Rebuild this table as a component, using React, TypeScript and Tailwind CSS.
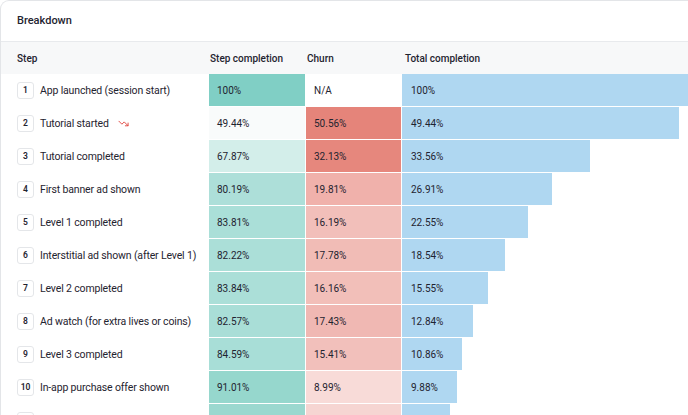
import { TrendingDown } from "lucide-react"

const rows = [
  { n: 1, label: "App launched (session start)", step: "100%", stepBg: "bg-[#80cfc5]", churn: "N/A", churnBg: "bg-white", total: "100%", pct: 100 },
  { n: 2, label: "Tutorial started", trend: true, step: "49.44%", stepBg: "bg-[#f9fbfb]", churn: "50.56%", churnBg: "bg-[#e5847a]", total: "49.44%", pct: 49.44 },
  { n: 3, label: "Tutorial completed", step: "67.87%", stepBg: "bg-[#d3eeea]", churn: "32.13%", churnBg: "bg-[#e6877d]", total: "33.56%", pct: 33.56 },
  { n: 4, label: "First banner ad shown", step: "80.19%", stepBg: "bg-[#addfd9]", churn: "19.81%", churnBg: "bg-[#f0b1ab]", total: "26.91%", pct: 26.91 },
  { n: 5, label: "Level 1 completed", step: "83.81%", stepBg: "bg-[#aadfd8]", churn: "16.19%", churnBg: "bg-[#f2bfba]", total: "22.55%", pct: 22.55 },
  { n: 6, label: "Interstitial ad shown (after Level 1)", step: "82.22%", stepBg: "bg-[#abdfd8]", churn: "17.78%", churnBg: "bg-[#f1bcb6]", total: "18.54%", pct: 18.54 },
  { n: 7, label: "Level 2 completed", step: "83.84%", stepBg: "bg-[#abdfd8]", churn: "16.16%", churnBg: "bg-[#f2bfb9]", total: "15.55%", pct: 15.55 },
  { n: 8, label: "Ad watch (for extra lives or coins)", step: "82.57%", stepBg: "bg-[#a9ded7]", churn: "17.43%", churnBg: "bg-[#f0b8b3]", total: "12.84%", pct: 12.84 },
  { n: 9, label: "Level 3 completed", step: "84.59%", stepBg: "bg-[#a8ded7]", churn: "15.41%", churnBg: "bg-[#f2c0bb]", total: "10.86%", pct: 10.86 },
  { n: 10, label: "In-app purchase offer shown", step: "91.01%", stepBg: "bg-[#96d7cd]", churn: "8.99%", churnBg: "bg-[#f8dbd8]", total: "9.88%", pct: 9.88 },
  { n: 11, label: "Level 4 completed", step: "90.12%", stepBg: "bg-[#9bd8cf]", churn: "9.88%", churnBg: "bg-[#f6d5d2]", total: "8.90%", pct: 8.7 },
]

export default function App() {
  return (
    <div className="w-[688px] h-[415px] overflow-hidden bg-white font-['Roboto',sans-serif] text-[#1f2430]">
      <div className="w-[760px] rounded-tl-[9px] border-l border-t border-[#e3e5e8]">
        <div className="h-[41px] flex items-center px-4 text-[11px] font-medium border-b border-[#e8eaed]">
          Breakdown
        </div>
        <div className="flex h-[32px] items-center bg-[#f7f8f9] text-[10px] font-medium">
          <div className="w-[208px] shrink-0 pl-4">Step</div>
          <div className="w-[97px] shrink-0 pl-[1px]">Step completion</div>
          <div className="w-[97px] shrink-0 pl-[1px]">Churn</div>
          <div className="pl-[2px]">Total completion</div>
        </div>
        {rows.map((r) => (
          <div key={r.n} className="flex h-[33px] text-[10px]">
            <div className="w-[208px] shrink-0 flex items-center gap-[6px] pl-4 text-[10.5px] tracking-[-0.15px] whitespace-nowrap">
              <span className="w-[17px] h-[17px] shrink-0 flex items-center justify-center rounded-[3px] border border-[#e4e6e9] text-[8.5px] font-semibold tracking-normal">
                {r.n}
              </span>
              <span>{r.label}</span>
              {r.trend && <TrendingDown className="ml-[3px] w-[11px] h-[11px] text-[#e0463f]" strokeWidth={2} />}
            </div>
            <div className={`w-[97px] shrink-0 flex items-center pl-2 border-r border-b border-white ${r.stepBg}`}>{r.step}</div>
            <div className={`w-[96px] shrink-0 flex items-center pl-2 border-r border-b border-white ${r.churnBg}`}>{r.churn}</div>
            <div className="flex-1 border-b border-white">
              <div className="h-full flex items-center pl-[9px] bg-[#afd7f1] border-r border-white" style={{ width: r.pct * 5.62 }}>
                {r.total}
              </div>
            </div>
          </div>
        ))}
      </div>
    </div>
  )
}
